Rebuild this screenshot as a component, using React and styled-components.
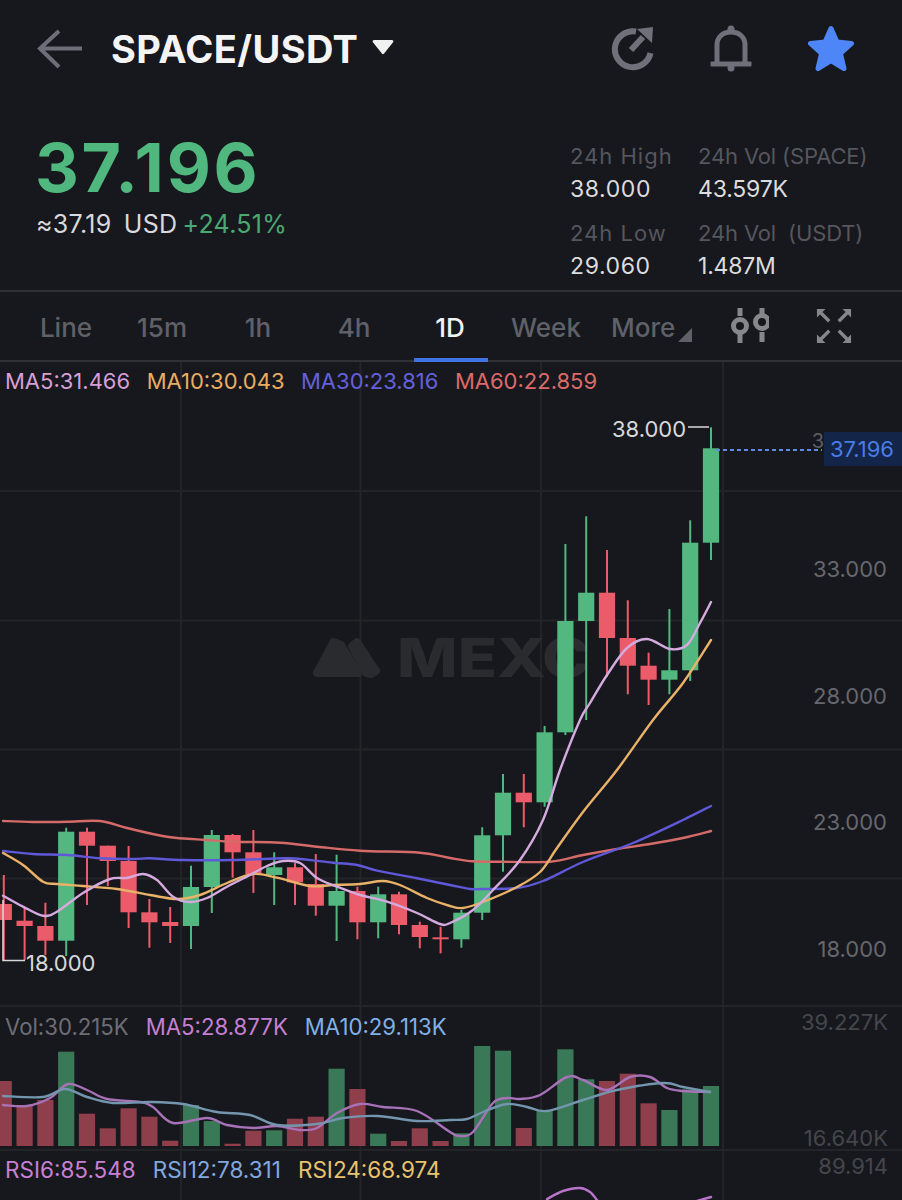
import React from 'react';
import styled, { createGlobalStyle } from 'styled-components';

const GRID = '#232428';
const GREEN = '#52b87f';
const RED = '#ec5b69';

// top, bottom of the wick and of the body, in page pixels
const candles = [
  [875, 960, 904, 920, 'r'], [908, 960, 920.7, 926, 'r'], [902.7, 955, 926, 940.7, 'r'], [827.7, 956, 831.7, 940.7, 'g'],
  [827.7, 905, 831.7, 845.7, 'r'], [845.7, 886, 845.7, 861, 'r'], [846, 928, 861, 912.3, 'r'], [899, 947.7, 912.3, 922.3, 'r'],
  [907, 943, 922, 926, 'r'], [865.7, 949, 887, 926, 'g'], [830, 913, 835, 887, 'g'], [834, 877.7, 835, 852.3, 'r'],
  [830, 893, 852.3, 874.3, 'r'], [852.3, 905, 867.3, 875, 'g'], [863, 905, 867.3, 882.3, 'r'], [854, 915.7, 884, 905.7, 'r'],
  [854.7, 941, 891, 905.7, 'g'], [886.7, 939.3, 891, 922.3, 'r'], [886.7, 938.3, 894.3, 922.3, 'g'], [891.7, 934.3, 894.3, 925, 'r'],
  [921.7, 948.3, 925, 937, 'r'], [926.7, 953.3, 937.3, 939.3, 'r'], [910, 947.7, 912.7, 939.3, 'g'], [827.3, 920, 835.3, 912.7, 'g'],
  [774, 871.7, 792.7, 835.3, 'g'], [774, 827.3, 792.7, 802.3, 'r'], [726, 806.7, 732.3, 802.3, 'g'], [544, 735, 621, 732.3, 'g'],
  [516.3, 720, 592.7, 621, 'g'], [550, 676.7, 592.7, 638, 'r'], [600.3, 694.3, 638, 665.7, 'r'], [652.7, 705, 665.7, 679.7, 'r'],
  [609, 694.3, 670.3, 679.7, 'g'], [520.3, 681, 542.7, 670.3, 'g'], [427.3, 560, 448.3, 542.7, 'g'],
];

const volumes = [1081, 1105, 1100, 1051.7, 1113.7, 1128.3, 1108.3, 1116.7, 1140.7, 1105, 1121, 1143.7, 1130.7, 1130.3, 1118.7, 1116.7,
  1068.7, 1089, 1133.7, 1141, 1128.3, 1141, 1133.3, 1046, 1050.7, 1128, 1110.7, 1049.3, 1079.3, 1081, 1073.7, 1103.3, 1110, 1089.3, 1086];

const ma60 = [[3, 821], [33, 822], [67, 821.7], [100, 821], [127, 828], [167, 836.7], [207, 840], [233, 841.7], [280, 842.7], [317, 846.7], [360, 850.7], [420, 852.7], [450, 858], [473, 861.3], [500, 861.7], [550, 861.7], [583, 855], [617, 849], [650, 844], [683, 838], [711, 831]];
const ma30 = [[3, 851], [33, 854], [67, 855], [100, 858.3], [133, 859], [150, 858.3], [183, 860], [233, 860], [283, 858.3], [300, 859], [333, 862.7], [357, 865], [377, 870.7], [417, 878.3], [450, 885], [470, 889], [482, 889], [517, 888], [543, 881], [583, 862], [633, 843], [683, 820], [711, 806]];
const ma10 = [[3, 853], [23, 865], [43, 881.7], [57, 884], [83, 886], [117, 889], [150, 895], [177, 899], [200, 895], [227, 883], [253, 874], [277, 877.7], [310, 886], [333, 885], [360, 884], [383, 881], [400, 885], [427, 898], [450, 906], [463, 908], [483, 902], [517, 887], [540, 872], [557, 848], [583, 812], [617, 770], [653, 720], [683, 683], [711, 640]];
const ma5 = [[3, 895.7], [23, 906.7], [43, 915.7], [57, 911.7], [83, 893], [110, 879], [127, 878], [143, 874], [157, 880], [173, 896.7], [190, 902], [207, 898], [227, 886.7], [250, 875], [267, 866], [283, 861], [300, 863], [317, 878], [337, 886.7], [360, 895], [387, 901.7], [417, 913], [440, 924], [450, 923], [473, 910], [493, 890], [520, 860], [543, 820], [560, 770], [580, 720], [590, 703], [607, 675], [627, 648], [647, 639], [670, 649], [687, 645], [700, 623], [711, 602]];

const volMa5 = [[3, 1105], [27, 1106], [50, 1098], [68, 1084], [87, 1090], [107, 1099], [140, 1102], [153, 1107], [173, 1123], [207, 1118], [227, 1125], [253, 1128], [277, 1126], [300, 1130], [317, 1128], [337, 1113], [360, 1104], [383, 1107], [417, 1111], [450, 1132], [460, 1136], [473, 1132], [493, 1103], [507, 1098], [520, 1099], [540, 1095], [567, 1077], [583, 1080], [607, 1090], [630, 1077], [650, 1077], [667, 1088], [683, 1091], [710, 1092]];
const volMa10 = [[3, 1096], [43, 1097], [65, 1089], [87, 1097], [113, 1103], [150, 1102], [183, 1104], [217, 1112], [250, 1115], [277, 1125], [317, 1124], [343, 1118], [377, 1116], [417, 1121], [450, 1120], [467, 1119], [483, 1112], [507, 1104], [527, 1107], [547, 1111], [583, 1100], [617, 1090], [663, 1083], [683, 1087], [710, 1092]];

const rsiA = [[547, 1199], [563, 1191], [580, 1188], [590, 1192], [597, 1200]];
const rsiB = [[697, 1201], [711, 1197]];

const candleX = i => 3.8 + i * 20.8;

// catmull-rom through the read points, good enough for smooth average lines
const smooth = pts => {
  let d = `M${pts[0][0]} ${pts[0][1]}`;
  for (let i = 0; i < pts.length - 1; i++) {
    const p0 = pts[i - 1] || pts[i];
    const p1 = pts[i];
    const p2 = pts[i + 1];
    const p3 = pts[i + 2] || p2;
    const c1x = p1[0] + (p2[0] - p0[0]) / 6;
    const c1y = p1[1] + (p2[1] - p0[1]) / 6;
    const c2x = p2[0] - (p3[0] - p1[0]) / 6;
    const c2y = p2[1] - (p3[1] - p1[1]) / 6;
    d += ` C${c1x.toFixed(1)} ${c1y.toFixed(1)} ${c2x.toFixed(1)} ${c2y.toFixed(1)} ${p2[0]} ${p2[1]}`;
  }
  return d;
};

const tabs = ['Line', '15m', '1h', '4h', '1D', 'Week'];

const App = () => {
  const gridColumns = [181, 360.5, 541, 723];

  return (
    <Screen>
      <GlobalStyle />
      <Header>
        <BackIcon viewBox="0 0 46 40">
          <path d="M45 19.5H3M22 2 3 19.5 22 38" />
        </BackIcon>
        <Pair>SPACE/USDT</Pair>
        <PairCaret viewBox="0 0 22 16">
          <path d="M2 1h18a1.4 1.4 0 0 1 1.1 2.2l-9 11.4a1.4 1.4 0 0 1-2.2 0L.9 3.2A1.4 1.4 0 0 1 2 1z" />
        </PairCaret>
        <HeaderIcons>
          <ShareIcon viewBox="0 0 44 46">
            <path d="M25 5.5A18 18 0 1 0 39.5 27" />
            <path d="M20 24 32 11" />
            <polygon points="26,3 42,1 41,17" />
          </ShareIcon>
          <BellIcon viewBox="0 0 42 48">
            <circle cx="21" cy="4" r="3.5" />
            <path d="M7 38V20C7 12 13 7 21 7s14 5 14 13v18" />
            <rect x="0.5" y="36.5" width="41" height="5" rx="1" />
            <circle cx="21" cy="43" r="3.5" />
          </BellIcon>
          <StarIcon viewBox="0 0 48 48">
            <polygon points="24,3.5 30,17 44.5,18.5 33.5,28.5 37,43.5 24,35.5 11,43.5 14.5,28.5 3.5,18.5 18,17" />
          </StarIcon>
        </HeaderIcons>
      </Header>

      <Quote>
        <PriceBlock>
          <LastPrice>37.196</LastPrice>
          <PriceSub>
            ≈37.19 USD<Change>+24.51%</Change>
          </PriceSub>
        </PriceBlock>
        <Stats>
          <Stat>
            <StatLabel $spaced>24h High</StatLabel>
            <StatValue $spaced>38.000</StatValue>
          </Stat>
          <Stat>
            <StatLabel>24h Vol (SPACE)</StatLabel>
            <StatValue>43.597K</StatValue>
          </Stat>
          <Stat>
            <StatLabel $spaced>24h Low</StatLabel>
            <StatValue $spaced>29.060</StatValue>
          </Stat>
          <Stat>
            <StatLabel>24h Vol  (USDT)</StatLabel>
            <StatValue>1.487M</StatValue>
          </Stat>
        </Stats>
      </Quote>

      <TabBar>
        {tabs.map(t => (
          <Tab key={t} $active={t === '1D'}>
            {t}
          </Tab>
        ))}
        <MoreTab>
          More
          <MoreCaret viewBox="0 0 14 14">
            <polygon points="14,0 14,14 0,14" />
          </MoreCaret>
        </MoreTab>
        <ToolIcon viewBox="0 0 40 40">
          <path d="M11 2v8M11 25v12M33 2v10M33 26v10" />
          <circle cx="11" cy="20" r="6.5" />
          <circle cx="33" cy="16" r="6.5" />
        </ToolIcon>
        <ExpandIcon viewBox="0 0 38 38">
          <polygon points="1,1 10,1 1,10" />
          <polygon points="37,1 28,1 37,10" />
          <polygon points="1,37 10,37 1,28" />
          <polygon points="37,37 28,37 37,28" />
          <path d="M5 5l9 9M33 5l-9 9M5 33l9-9M33 33l-9-9" />
        </ExpandIcon>
      </TabBar>

      <MainPane>
        <PaneSvg viewBox="0 362 902 643">
          {[491, 620.5, 749.5, 878.5].map(y => (
            <GridLine key={y} x1="0" x2="902" y1={y} y2={y} />
          ))}
          {gridColumns.map(x => (
            <GridLine key={x} x1={x} x2={x} y1="362" y2="1006" />
          ))}

          {/* watermark sits under the candles */}
          <WatermarkLogo points="333.5,642 317,673 358,673 341,645" />
          <WatermarkLogo points="352,646 357,642 376,671 371,674 366,673" />
          <Watermark x="397" y="677" textLength="193" lengthAdjust="spacingAndGlyphs">
            MEXC
          </Watermark>

          {candles.map(([top, bottom, bodyTop, bodyBottom, side], i) => (
            <g key={i} fill={side === 'g' ? GREEN : RED}>
              <rect x={candleX(i) - 1} y={top} width="2" height={bottom - top} />
              <rect x={candleX(i) - 8.1} y={bodyTop} width="16.2" height={bodyBottom - bodyTop} />
            </g>
          ))}

          <AvgLine d={smooth(ma60)} stroke="#d56b68" />
          <AvgLine d={smooth(ma30)} stroke="#5f58d8" />
          <AvgLine d={smooth(ma10)} stroke="#e9b268" />
          <AvgLine d={smooth(ma5)} stroke="#d5aadf" />

          <line x1="688" x2="709" y1="427" y2="427" stroke="#d8d8d8" strokeWidth="1.5" />
          <path d="M3 900V960.5H25" fill="none" stroke="#d8d8d8" strokeWidth="1.5" />
          <line x1="716" x2="822" y1="450" y2="450" stroke="#5f8ae6" strokeWidth="1.8" strokeDasharray="4 3" />
        </PaneSvg>

        <Legend>
          <LegendItem $color="#d69fd8">MA5:31.466</LegendItem>
          <LegendItem $color="#e8ad63">MA10:30.043</LegendItem>
          <LegendItem $color="#6460dc">MA30:23.816</LegendItem>
          <LegendItem $color="#dc6a68">MA60:22.859</LegendItem>
        </Legend>

        <ExtremeLabel $left={612} $top={416}>38.000</ExtremeLabel>
        <ExtremeLabel $left={26} $top={950}>18.000</ExtremeLabel>
        <TagStub>3</TagStub>
        <PriceTag>37.196</PriceTag>
        <AxisLabel $top={556}>33.000</AxisLabel>
        <AxisLabel $top={683}>28.000</AxisLabel>
        <AxisLabel $top={809}>23.000</AxisLabel>
        <AxisLabel $top={936}>18.000</AxisLabel>
      </MainPane>

      <VolPane>
        <PaneSvg viewBox="0 1007 902 142">
          {gridColumns.map(x => (
            <GridLine key={x} x1={x} x2={x} y1="1007" y2="1151" />
          ))}
          {volumes.map((top, i) => (
            <rect
              key={i}
              x={candleX(i) - 8.1}
              y={top}
              width="16.2"
              height={1146 - top}
              fill={candles[i][4] === 'g' ? '#3a7957' : '#8f3e4b'}
            />
          ))}
          <AvgLine d={smooth(volMa5)} stroke="#a872b8" />
          <AvgLine d={smooth(volMa10)} stroke="#7396ae" />
        </PaneSvg>
        <Legend $pane="vol">
          <LegendItem $color="#6d6e75">Vol:30.215K</LegendItem>
          <LegendItem $color="#c680d2">MA5:28.877K</LegendItem>
          <LegendItem $color="#80b0e8">MA10:29.113K</LegendItem>
        </Legend>
        <DimLabel $top={2}>39.227K</DimLabel>
        <DimLabel $top={118}>16.640K</DimLabel>
      </VolPane>

      <RsiPane>
        <PaneSvg viewBox="0 1151 902 49">
          {gridColumns.map(x => (
            <GridLine key={x} x1={x} x2={x} y1="1151" y2="1200" />
          ))}
          <AvgLine d={smooth(rsiA)} stroke="#b973cb" />
          <AvgLine d={smooth(rsiB)} stroke="#b973cb" />
        </PaneSvg>
        <Legend $pane="rsi">
          <LegendItem $color="#c880d4">RSI6:85.548</LegendItem>
          <LegendItem $color="#80a9e0">RSI12:78.311</LegendItem>
          <LegendItem $color="#e7c46c">RSI24:68.974</LegendItem>
        </Legend>
        <DimLabel $top={2}>89.914</DimLabel>
      </RsiPane>
    </Screen>
  );
};

const GlobalStyle = createGlobalStyle`
  html, body {
    margin: 0;
    background: #17181d;
  }
  * {
    box-sizing: border-box;
  }
`;

const Screen = styled.div`
  width: 902px;
  height: 1200px;
  overflow: hidden;
  background: #17181d;
  font-family: Inter, 'Liberation Sans', sans-serif;
`;

const Header = styled.header`
  display: flex;
  align-items: center;
  height: 98px;
  padding: 0 47px 0 37px;
`;

const BackIcon = styled.svg`
  width: 46px;
  height: 40px;
  fill: none;
  stroke: #6d6f78;
  stroke-width: 4;
  margin-right: 28px;
`;

const Pair = styled.h1`
  margin: 0;
  font-size: 38px;
  font-weight: 700;
  letter-spacing: 0.4px;
  color: #f4f4f5;
`;

const PairCaret = styled.svg`
  width: 22px;
  height: 16px;
  margin: 0 0 5px 14px;
  fill: #f0f0f0;
`;

const HeaderIcons = styled.div`
  display: flex;
  align-items: center;
  margin-left: auto;
`;

const ShareIcon = styled.svg`
  width: 44px;
  height: 46px;
  fill: none;
  stroke: #6f717a;
  stroke-width: 6;
  polygon {
    fill: #6f717a;
    stroke: none;
  }
`;

const BellIcon = styled.svg`
  width: 42px;
  height: 48px;
  margin-left: 55px;
  fill: none;
  stroke: #6f717a;
  stroke-width: 5;
  rect,
  circle {
    fill: #6f717a;
    stroke: none;
  }
`;

const StarIcon = styled.svg`
  width: 48px;
  height: 48px;
  margin-left: 55px;
  fill: #4f86f7;
  stroke: #4f86f7;
  stroke-width: 5;
  stroke-linejoin: round;
`;

const Quote = styled.section`
  display: flex;
  justify-content: space-between;
  height: 194px;
  padding: 34px 0 0 35px;
  border-bottom: 2px solid #303136;
`;

const PriceBlock = styled.div`
  display: flex;
  flex-direction: column;
`;

const LastPrice = styled.div`
  font-size: 68px;
  line-height: 70px;
  font-weight: 700;
  color: #50b87e;
  letter-spacing: 2.7px;
`;

const PriceSub = styled.div`
  margin: 7px 0 0 1px;
  font-size: 25px;
  line-height: 30px;
  letter-spacing: 0.3px;
  word-spacing: 5px;
  color: #d9d9dc;
`;

const Change = styled.span`
  margin-left: 5px;
  color: #4aa873;
`;

const Stats = styled.div`
  display: grid;
  grid-template-columns: 128px 204px;
  grid-auto-rows: 77px;
  margin-top: -1px;
`;

const Stat = styled.div`
  display: flex;
  flex-direction: column;
  gap: 5px;
  padding-top: 11px;
`;

const StatLabel = styled.span`
  font-size: 22px;
  line-height: 28px;
  letter-spacing: ${p => (p.$spaced ? '1px' : '-0.15px')};
  color: #55565e;
  white-space: pre;
`;

const StatValue = styled.span`
  font-size: 23px;
  line-height: 28px;
  letter-spacing: ${p => (p.$spaced ? '0.6px' : '-0.2px')};
  color: #dcdcde;
`;

const TabBar = styled.nav`
  display: flex;
  align-items: center;
  height: 70px;
  padding: 3px 0 0 18px;
  border-bottom: 2px solid #303136;
`;

const Tab = styled.div`
  position: relative;
  width: 96px;
  height: 100%;
  display: flex;
  align-items: center;
  justify-content: center;
  font-size: 26px;
  font-weight: 500;
  color: ${p => (p.$active ? '#f2f2f3' : '#5f6169')};
  &::after {
    content: '';
    display: ${p => (p.$active ? 'block' : 'none')};
    position: absolute;
    left: 12px;
    right: 10px;
    bottom: -2px;
    height: 4px;
    background: #3f72e6;
  }
`;

const MoreTab = styled.div`
  position: relative;
  margin-left: 17px;
  font-size: 26px;
  font-weight: 500;
  color: #5f6169;
`;

const MoreCaret = styled.svg`
  position: absolute;
  left: 67px;
  bottom: 1px;
  width: 14px;
  height: 14px;
  fill: #5f6169;
`;

const ToolIcon = styled.svg`
  width: 40px;
  height: 40px;
  margin: -4px 0 0 54px;
  fill: none;
  stroke: #87878b;
  stroke-width: 5;
`;

const ExpandIcon = styled.svg`
  width: 36px;
  height: 36px;
  margin: -4px 0 0 47px;
  fill: #87878b;
  stroke: #87878b;
  stroke-width: 3.5;
  polygon {
    stroke: none;
  }
`;

const MainPane = styled.section`
  position: relative;
  height: 645px;
  border-bottom: 2px solid ${GRID};
`;

const VolPane = styled.section`
  position: relative;
  height: 144px;
  border-bottom: 2px solid ${GRID};
`;

const RsiPane = styled.section`
  position: relative;
  height: 49px;
`;

const PaneSvg = styled.svg`
  position: absolute;
  inset: 0;
  width: 902px;
  height: 100%;
`;

const GridLine = styled.line`
  stroke: ${GRID};
  stroke-width: 2;
`;

const AvgLine = styled.path`
  fill: none;
  stroke-width: 2.4;
  stroke-linecap: round;
`;

const Watermark = styled.text`
  font-size: 54px;
  font-weight: 800;
  fill: #2a2b2f;
`;

const WatermarkLogo = styled.polygon`
  fill: #2a2b2f;
  stroke: #2a2b2f;
  stroke-width: 8;
  stroke-linejoin: round;
`;

const Legend = styled.div`
  position: relative;
  display: flex;
  gap: ${p => (p.$pane ? '17px' : '16.5px')};
  padding: ${p => (p.$pane === 'rsi' ? '6px 0 0 5px' : p.$pane === 'vol' ? '7px 0 0 5px' : '6px 0 0 5px')};
  font-size: ${p => (p.$pane === 'rsi' ? '22.5px' : p.$pane === 'vol' ? '22.2px' : '22px')};
  line-height: 26px;
`;

const LegendItem = styled.span`
  color: ${p => p.$color};
`;

const ExtremeLabel = styled.span`
  position: absolute;
  left: ${p => p.$left}px;
  top: ${p => p.$top - 362}px;
  font-size: 22px;
  line-height: 26px;
  color: #d8d8da;
`;

const AxisLabel = styled.span`
  position: absolute;
  right: 15px;
  top: ${p => p.$top - 362}px;
  font-size: 22px;
  line-height: 26px;
  color: #66676e;
`;

const DimLabel = styled.span`
  position: absolute;
  right: 14px;
  top: ${p => p.$top}px;
  font-size: 22px;
  line-height: 26px;
  color: #45464c;
`;

// what the price tag leaves showing of the axis label behind it
const TagStub = styled.span`
  position: absolute;
  right: 78px;
  top: 67px;
  font-size: 20px;
  line-height: 24px;
  color: #5c5d63;
`;

const PriceTag = styled.span`
  position: absolute;
  right: 0;
  top: 70px;
  height: 34px;
  padding: 0 8px 0 6px;
  font-size: 22px;
  line-height: 34px;
  color: #4a7ce6;
  background: #14254a;
`;

export default App;
